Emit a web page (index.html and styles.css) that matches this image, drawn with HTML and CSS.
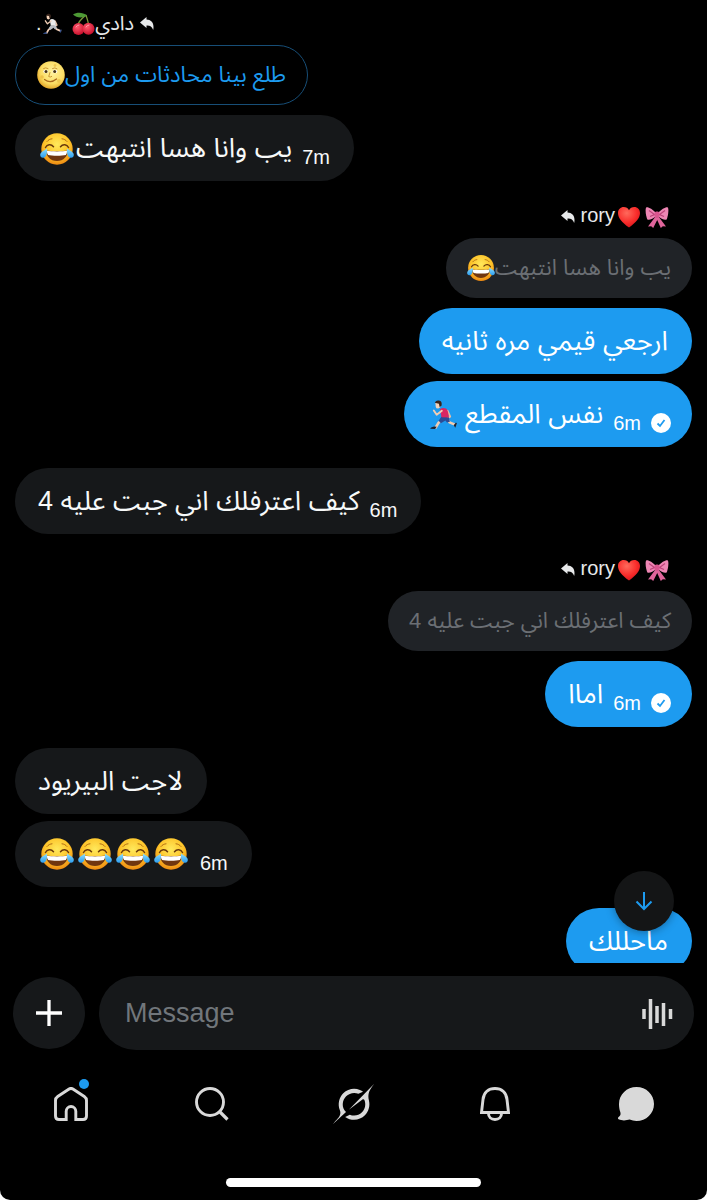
FILE: index.html
```
<!DOCTYPE html>
<html lang="ar">
<head>
    <meta charset="UTF-8">
    <meta name="viewport" content="width=device-width, initial-scale=1.0">
    <title>Messages</title>
    <link rel="stylesheet" href="styles.css">
</head>
<body>
    <!-- Shared icons -->
    <svg class="sprite" aria-hidden="true">
        <defs>
            <radialGradient id="face-fill" cx="50%" cy="35%" r="65%">
                <stop offset="0" stop-color="#ffe95c"/>
                <stop offset="0.6" stop-color="#fdc42a"/>
                <stop offset="1" stop-color="#ee8a12"/>
            </radialGradient>
            <linearGradient id="tear-fill" x1="0" y1="0" x2="0" y2="1">
                <stop offset="0" stop-color="#8fe0ff"/>
                <stop offset="1" stop-color="#2b9df0"/>
            </linearGradient>
            <radialGradient id="moon-fill" cx="55%" cy="40%" r="60%">
                <stop offset="0" stop-color="#fff3a0"/>
                <stop offset="0.7" stop-color="#fbdc62"/>
                <stop offset="1" stop-color="#e5a92c"/>
            </radialGradient>
            <radialGradient id="heart-fill" cx="40%" cy="30%" r="75%">
                <stop offset="0" stop-color="#ff6a5c"/>
                <stop offset="0.6" stop-color="#f92d2b"/>
                <stop offset="1" stop-color="#d5141c"/>
            </radialGradient>
            <radialGradient id="cherry-fill" cx="40%" cy="35%" r="65%">
                <stop offset="0" stop-color="#ff5a6e"/>
                <stop offset="1" stop-color="#c8102c"/>
            </radialGradient>
        </defs>
        <symbol id="joy" viewBox="0 0 34 34">
            <circle cx="17" cy="17" r="15.7" fill="url(#face-fill)"/>
            <path d="M5.500 15.500c1.500-3 5.500-3.800 8-.8M28.500 15.500c-1.500-3-5.500-3.800-8-.8" fill="none" stroke="#6b3a0c" stroke-width="1.500" stroke-linecap="round"/>
            <path d="M7 9.500c1.500-1.800 3-2.500 5-2.700M27 9.500c-1.500-1.800-3-2.500-5-2.700" fill="none" stroke="#b06a12" stroke-width="1" stroke-linecap="round"/>
            <path d="M6.500 18.500c3 1 18 1 21 0 .8 5.500-4 10.500-10.500 10.500S5.700 24 6.500 18.500z" fill="#70360f"/>
            <path d="M7 18.800c4 .8 16 .8 20 0 .1 2-.5 3.700-1.200 4.200-4 1-13.600 1-17.600 0-.7-.5-1.300-2.200-1.200-4.200z" fill="#fff"/>
            <path d="M6.800 16.500c.8 4.500-.6 9-3.600 9.300C.8 26-.4 23.800.5 21.600c.8-2 4-3 6.300-5.100z" fill="url(#tear-fill)"/>
            <path d="M27.200 16.500c-.8 4.500.6 9 3.600 9.300 2.400.2 3.600-2 2.700-4.200-.8-2-4-3-6.300-5.100z" fill="url(#tear-fill)"/>
        </symbol>
        <symbol id="moon" viewBox="0 0 28 28">
            <circle cx="14" cy="14" r="13.800" fill="url(#moon-fill)"/>
            <circle cx="5" cy="16" r="1.800" fill="#eec24a"/>
            <circle cx="22" cy="20" r="2" fill="#f0c850"/>
            <circle cx="18" cy="4.500" r="1.400" fill="#f0c850"/>
            <ellipse cx="8.700" cy="10.500" rx="2.300" ry="1.700" fill="#fff"/>
            <ellipse cx="18" cy="10.500" rx="2.300" ry="1.700" fill="#fff"/>
            <circle cx="9" cy="10.500" r="1.500" fill="#4a3510"/>
            <circle cx="17.700" cy="10.500" r="1.500" fill="#4a3510"/>
            <path d="M6.500 7.500q2-1.500 4.500 0M15.500 7.500q2.500-1.500 4.500.2M13 11.500l-1.300 4q1.500 1.200 3 0" fill="none" stroke="#c58f28" stroke-width="0.900" stroke-linecap="round"/>
            <path d="M7.500 18.500q6 4.500 12-.5" fill="none" stroke="#a8661b" stroke-width="1.200" stroke-linecap="round"/>
        </symbol>
        <symbol id="heart" viewBox="0 0 24 24">
            <path d="M12 22.500C5 17.500 1 13 1 8 1 4.500 3.500 2 6.700 2 9 2 11 3.200 12 5.200 13 3.200 15 2 17.300 2 20.500 2 23 4.500 23 8c0 5-4 9.500-11 14.500z" fill="url(#heart-fill)"/>
        </symbol>
        <symbol id="bow" viewBox="0 0 24 24">
            <path d="M10.500 11.500L3 21.500l3.200-.3L8.200 23l5-10z" fill="#e0659b"/>
            <path d="M13.500 11.500l7.500 10-3.200-.3L15.800 23l-4.500-10z" fill="#e0659b"/>
            <path d="M11 8C7.500 4 2.500 1.500 1.200 2.500c-1.500 2 .3 11 1.300 12 1.500 1 6-1 8.500-3.200z" fill="#ee86b4"/>
            <path d="M13 8c3.500-4 8.500-6.500 9.800-5.500 1.500 2-.3 11-1.300 12-1.500 1-6-1-8.500-3.200z" fill="#ee86b4"/>
            <path d="M4 5.500l5.500 4L5 11.500M20 5.500l-5.500 4 4.500 2" fill="none" stroke="#bd4279" stroke-width="1.200"/>
            <rect x="9.500" y="6.500" width="5" height="6.500" rx="2" fill="#d9568f"/>
        </symbol>
        <symbol id="cherries" viewBox="0 0 24 24">
            <path d="M15 3C10 7 7 10 6.500 14M15 3c1 4 2.500 7 2.500 10" fill="none" stroke="#7b9a3a" stroke-width="1.300"/>
            <path d="M16 3.500C12 .2 6-.2 2 2.500c3.500 3.500 9.500 4 14 1z" fill="#4d9a35"/>
            <circle cx="7.500" cy="17" r="6" fill="url(#cherry-fill)"/>
            <circle cx="17.500" cy="16.800" r="6" fill="url(#cherry-fill)"/>
            <path d="M5 15q1-2 3-2M15 15q1-2 3-2" fill="none" stroke="#ff9aa8" stroke-width="1" stroke-linecap="round"/>
        </symbol>
        <symbol id="runner" viewBox="-2 -6 106 106">
            <path d="M56 34l8 18-10 6" fill="none" stroke="#e6bfa4" stroke-width="6" stroke-linecap="round" stroke-linejoin="round"/>
            <path d="M54 58l8 12 17 7" fill="none" stroke="#f0cdb4" stroke-width="8" stroke-linecap="round" stroke-linejoin="round"/>
            <path d="M42 60L27 72l-8 14" fill="none" stroke="#f0cdb4" stroke-width="8" stroke-linecap="round" stroke-linejoin="round"/>
            <path d="M75 79l7-9 3 3-5 14zM22 84l-5 7-15-1q0-4 12-7z" class="runner-shoe"/>
            <path d="M37 52l23 2 3 14-9 2-5-6-14 9-7-8z" class="runner-shorts"/>
            <path d="M32 29q9-7 19-2 7 4 9 28l-23-1z" class="runner-shirt"/>
            <path d="M38 34L22 46l-9-13" fill="none" stroke="#f0cdb4" stroke-width="6" stroke-linecap="round" stroke-linejoin="round"/>
            <path d="M18 10q8-7 16 1l-1 12-6 4q-8 0-8-6z" fill="#f4d3ba"/>
            <path d="M16 9Q20 0 29 2q11 2 8 16l-6 4-2-10z" fill="#38241b"/>
        </symbol>
        <symbol id="reply" viewBox="0 0 14 13">
            <path d="M6.500 0L0 5.500 6.500 11V8.500c3.500-.2 5.500 1 6.700 4.500C14.500 6 11.500 2.800 6.500 2.500z" fill="currentColor"/>
        </symbol>
        <symbol id="sent" viewBox="0 0 20 20">
            <circle cx="10" cy="10" r="10" fill="#fff"/>
            <path d="M6.500 10.500L9 13l4.500-6" fill="none" stroke="#1d9bf0" stroke-width="1.800"/>
        </symbol>
    </svg>

    <div class="app">
        <main class="thread-wrap">
            <div class="thread">
                <div class="group">
                    <div class="reply-to" dir="rtl">
                        <svg class="reply-icon"><use href="#reply"/></svg>
                        <span>دادي<svg class="emoji" role="img" aria-label="cherries"><use href="#cherries"/></svg> <svg class="emoji runner-white" role="img" aria-label="runner"><use href="#runner"/></svg>.</span>
                    </div>
                    <div class="quote quote-outline" dir="rtl">طلع بينا محادثات من اول<svg class="emoji" role="img" aria-label="moon"><use href="#moon"/></svg></div>
                    <div class="bubble">
                        <span dir="rtl">يب وانا هسا انتبهت<svg class="emoji" role="img" aria-label="joy"><use href="#joy"/></svg></span>
                        <time>7m</time>
                    </div>
                </div>

                <div class="group mine">
                    <div class="reply-to">
                        <svg class="reply-icon"><use href="#reply"/></svg>
                        <span>rory<svg class="emoji" role="img" aria-label="heart"><use href="#heart"/></svg><svg class="emoji" role="img" aria-label="bow"><use href="#bow"/></svg></span>
                    </div>
                    <div class="quote" dir="rtl">يب وانا هسا انتبهت<svg class="emoji" role="img" aria-label="joy"><use href="#joy"/></svg></div>
                    <div class="bubble"><span dir="rtl">ارجعي قيمي مره ثانيه</span></div>
                    <div class="bubble bubble-sent">
                        <span dir="rtl">نفس المقطع<svg class="emoji" role="img" aria-label="runner"><use href="#runner"/></svg></span>
                        <time>6m</time>
                        <svg class="sent" role="img" aria-label="Sent"><use href="#sent"/></svg>
                    </div>
                </div>

                <div class="group">
                    <div class="bubble">
                        <span dir="rtl">كيف اعترفلك اني جبت عليه 4</span>
                        <time>6m</time>
                    </div>
                </div>

                <div class="group mine">
                    <div class="reply-to">
                        <svg class="reply-icon"><use href="#reply"/></svg>
                        <span>rory<svg class="emoji" role="img" aria-label="heart"><use href="#heart"/></svg><svg class="emoji" role="img" aria-label="bow"><use href="#bow"/></svg></span>
                    </div>
                    <div class="quote" dir="rtl">كيف اعترفلك اني جبت عليه 4</div>
                    <div class="bubble bubble-sent">
                        <span dir="rtl">اماا</span>
                        <time>6m</time>
                        <svg class="sent" role="img" aria-label="Sent"><use href="#sent"/></svg>
                    </div>
                </div>

                <div class="group">
                    <div class="bubble"><span dir="rtl">لاجت البيريود</span></div>
                    <div class="bubble">
                        <span><svg class="emoji" role="img" aria-label="joy"><use href="#joy"/></svg><svg class="emoji" role="img" aria-label="joy"><use href="#joy"/></svg><svg class="emoji" role="img" aria-label="joy"><use href="#joy"/></svg><svg class="emoji" role="img" aria-label="joy"><use href="#joy"/></svg></span>
                        <time>6m</time>
                    </div>
                </div>

                <div class="group mine">
                    <div class="bubble"><span dir="rtl">ماحللك</span></div>
                </div>
            </div>
            <button class="scroll-down" type="button" aria-label="Scroll to latest">
                <svg width="18" height="20" viewBox="0 0 18 20"><path d="M9 1v17M1.500 10.500L9 18l7.500-7.500" fill="none" stroke="currentColor" stroke-width="2"/></svg>
            </button>
        </main>

        <form class="composer">
            <button class="add" type="button" aria-label="Add attachment">
                <svg width="28" height="28" viewBox="0 0 28 28"><path d="M14 1v26M1 14h26" fill="none" stroke="currentColor" stroke-width="3.300"/></svg>
            </button>
            <div class="field">
                <input type="text" placeholder="Message" aria-label="Message">
                <button class="voice" type="button" aria-label="Record voice message">
                    <svg width="31" height="30" viewBox="0 0 31 30"><path d="M2 10v10M8.500 0v30M15 7v17M21.500 4v23M28.500 10v10" fill="none" stroke="currentColor" stroke-width="3.500"/></svg>
                </button>
            </div>
        </form>

        <nav class="tabs">
            <a href="#" class="tab" aria-label="Home">
                <svg width="34" height="34" viewBox="0 0 34 34"><path d="M14.700 2.200q2.300-1.500 4.600 0l11 7.300q2.200 1.500 2.200 4v15.500q0 3.500-3.500 3.500h-7.200V24.300a4.800 4.800 0 0 0-9.600 0v8.200H5q-3.500 0-3.500-3.500V13.500q0-2.500 2.200-4z" fill="none" stroke="currentColor" stroke-width="2.900"/></svg>
                <span class="badge"></span>
            </a>
            <a href="#" class="tab" aria-label="Search">
                <svg width="34" height="34" viewBox="0 0 34 34"><circle cx="15" cy="15" r="13.500" fill="none" stroke="currentColor" stroke-width="2.900"/><path d="M24.500 24.500l8 8" stroke="currentColor" stroke-width="3.200"/></svg>
            </a>
            <a href="#" class="tab" aria-label="Grok">
                <svg width="41" height="40" viewBox="0 0 33 32"><path fill="currentColor" d="M12.745 20.540l10.970-8.190c.539-.4 1.307-.244 1.564.38 1.349 3.288.746 7.241-1.938 9.955-2.683 2.714-6.417 3.310-9.830 1.954l-3.728 1.745c5.347 3.697 11.840 2.782 15.898-1.324 3.219-3.255 4.216-7.692 3.284-11.693l.008.009c-1.351-5.878.332-8.227 3.782-13.031L33 0l-4.540 4.590v-.014L12.743 20.544m-2.263 1.987c-3.837-3.707-3.175-9.446.1-12.755 2.420-2.449 6.388-3.448 9.852-1.979l3.720-1.737c-.67-.49-1.530-1.017-2.515-1.387-4.455-1.854-9.789-.931-13.410 2.728-3.483 3.523-4.579 8.940-2.697 13.561 1.405 3.454-.899 5.898-3.220 8.364C1.490 30.200.666 31.074 0 32l10.478-9.466"/></svg>
            </a>
            <a href="#" class="tab" aria-label="Notifications">
                <svg width="30" height="34" viewBox="0 0 30 34"><path d="M1.500 25.500L3 12.500C3.700 5.500 8.500 1.500 15 1.500s11.300 4 12 11l1.500 13zM8.500 26.500c0 3.500 2.500 6 6.500 6s6.500-2.500 6.500-6" fill="none" stroke="currentColor" stroke-width="2.900"/></svg>
            </a>
            <a href="#" class="tab" aria-label="Messages">
                <svg width="36" height="34" viewBox="0 0 36 34"><path fill="currentColor" d="M18.500 0C28.200 0 36 7.500 36 17s-7.800 17-17.500 17c-2.500 0-4.700-.5-6.800-1.400C8.500 33.500 4 34 .6 32.300c-.8-.5-.8-1.700 0-2.300 2-1.600 2.300-3 1.600-5.200C1.400 22.500 1 19.500 1 17 1 7.500 8.800 0 18.500 0z"/></svg>
            </a>
        </nav>
        <div class="home-indicator"></div>
    </div>
</body>
</html>
```

FILE: styles.css
```
* {
    box-sizing: border-box;
}
body {
    margin: 0;
    background: #fff;
    color: #f7f9f9;
    font-family: "Liberation Sans", "Noto Sans Arabic", "DejaVu Sans", sans-serif;
}
button {
    border: none;
    padding: 0;
    cursor: pointer;
}
.sprite {
    position: absolute;
    width: 0;
    height: 0;
}
.app {
    display: flex;
    flex-direction: column;
    height: 100vh;
    background: #000;
    border-radius: 0 0 10px 10px;
    overflow: hidden;
}

/* Conversation */
.thread-wrap {
    position: relative;
    flex: 1;
    min-height: 0;
}
.thread {
    display: flex;
    flex-direction: column;
    gap: 21px;
    height: 100%;
    padding: 9px 15px 0;
    overflow: hidden;
}
.group {
    display: flex;
    flex-direction: column;
    flex-shrink: 0;
    align-items: flex-start;
    gap: 7px;
}
.mine {
    align-items: flex-end;
}
.reply-to {
    display: flex;
    align-items: center;
    gap: 6px;
    height: 29px;
    padding: 0 21px;
    font-size: 20px;
    color: #e7e9ea;
    white-space: nowrap;
}
.reply-icon {
    width: 14px;
    height: 13px;
}
.emoji {
    width: 34px;
    height: 34px;
    margin: 0 2px;
    vertical-align: middle;
}
.reply-to .emoji {
    width: 24px;
    height: 24px;
}
.reply-to[dir="rtl"] .emoji {
    margin: 0;
}
.quote {
    display: flex;
    align-items: center;
    height: 60px;
    margin-bottom: 3px;
    padding: 0 21px;
    border-radius: 30px;
    background: #202327;
    color: #6b6f74;
    font-size: 22px;
    white-space: nowrap;
}
.quote .emoji {
    width: 28px;
    height: 28px;
    margin: 0;
}
.quote-outline {
    background: none;
    border: 1px solid #174e77;
    color: #1d9bf0;
}
.bubble {
    display: flex;
    align-items: center;
    gap: 10px;
    height: 66px;
    padding: 0 24px 0 23px;
    border-radius: 33px;
    background: #16181a;
    font-size: 27px;
    white-space: nowrap;
}
.bubble .emoji {
    margin: 0 2px;
}
.mine .bubble {
    background: #1d9bf0;
    color: #fff;
}
.bubble-sent {
    padding-right: 21px;
}
.bubble time {
    padding-top: 18px;
    font-size: 20px;
}
.sent {
    width: 20px;
    height: 20px;
    margin-top: 18px;
}
.runner-shirt {
    fill: var(--shirt, #d92662);
}
.runner-shorts {
    fill: var(--shorts, #2b4b96);
}
.runner-shoe {
    fill: var(--shoe, #1d2230);
}
.runner-white {
    --shirt: #ececec;
    --shorts: #b9bcc2;
    --shoe: #34508c;
}
.scroll-down {
    position: absolute;
    right: 33px;
    bottom: 32px;
    display: grid;
    place-items: center;
    width: 60px;
    height: 60px;
    border-radius: 50%;
    background: #141516;
    color: #1d9bf0;
    box-shadow: 0 1px 8px rgba(0,0,0,0.35);
}

/* Composer */
.composer {
    display: flex;
    align-items: center;
    gap: 14px;
    padding: 13px 13px 0;
}
.add {
    display: grid;
    place-items: center;
    width: 72px;
    height: 72px;
    border-radius: 50%;
    background: #16181a;
    color: #fff;
}
.field {
    display: flex;
    align-items: center;
    flex: 1;
    height: 74px;
    padding: 1px 21px 0 26px;
    border-radius: 37px;
    background: #16181a;
}
.field input {
    flex: 1;
    min-width: 0;
    padding: 0;
    border: none;
    outline: none;
    background: none;
    color: #fff;
    font-family: inherit;
    font-size: 27px;
}
.field input::placeholder {
    color: #71767b;
    opacity: 1;
}
.voice {
    display: grid;
    background: none;
    color: #d9d9d9;
}

/* Bottom tabs */
.tabs {
    display: flex;
    height: 108px;
}
.tab {
    position: relative;
    display: grid;
    place-items: center;
    flex: 1;
    color: #d9d9d9;
}
.badge {
    position: absolute;
    top: 29px;
    left: calc(50% + 8px);
    width: 10px;
    height: 10px;
    border-radius: 50%;
    background: #1d9bf0;
}
.home-indicator {
    width: 36%;
    height: 9px;
    margin: 20px auto 13px;
    border-radius: 5px;
    background: #fff;
}
```
